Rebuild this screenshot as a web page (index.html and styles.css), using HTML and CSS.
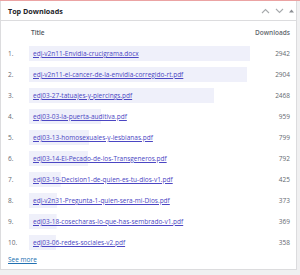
FILE: index.html
```html
<!DOCTYPE html>
<html lang="es">
<head>
  <meta charset="UTF-8">
  <title>Top Downloads</title>
  <link rel="stylesheet" href="styles.css">
</head>
<body>
  <div class="postbox">
    <div class="postbox-header">
      <h2>Top Downloads</h2>
      <div class="handle-actions">
        <svg width="9" height="6" viewBox="0 0 9 6"><path d="M1 5 4.5 1.5 8 5" fill="none" stroke="#a7aaad" stroke-width="1.1"/></svg>
        <svg width="9" height="6" viewBox="0 0 9 6"><path d="M1 1 4.5 4.5 8 1" fill="none" stroke="#a7aaad" stroke-width="1.1"/></svg>
        <svg width="5" height="4" viewBox="0 0 5 4"><path d="M0 3.5 2.5 0.5 5 3.5z" fill="#8c8f94"/></svg>
      </div>
    </div>

    <div class="inside">
      <div class="dl-row dl-head">
        <span></span>
        <span class="col-title">Title</span>
        <span class="col-count">Downloads</span>
      </div>

      <div class="dl-row">
        <span class="num">1.</span>
        <span class="col-title bar" style="background-size: 100% 15px"><a href="#">edj-v2n11-Envidia-crucigrama.docx</a></span>
        <span class="col-count">2942</span>
      </div>
      <div class="dl-row">
        <span class="num">2.</span>
        <span class="col-title bar" style="background-size: 98.7% 15px"><a href="#">edj-v2n11-el-cancer-de-la-envidia-corregido-rt.pdf</a></span>
        <span class="col-count">2904</span>
      </div>
      <div class="dl-row">
        <span class="num">3.</span>
        <span class="col-title bar" style="background-size: 83.9% 15px"><a href="#">edj03-27-tatuajes-y-piercings.pdf</a></span>
        <span class="col-count">2468</span>
      </div>
      <div class="dl-row">
        <span class="num">4.</span>
        <span class="col-title bar" style="background-size: 32.6% 15px"><a href="#">edj03-03-la-puerta-auditiva.pdf</a></span>
        <span class="col-count">959</span>
      </div>
      <div class="dl-row">
        <span class="num">5.</span>
        <span class="col-title bar" style="background-size: 27.2% 15px"><a href="#">edj03-13-homosexuales-y-lesbianas.pdf</a></span>
        <span class="col-count">799</span>
      </div>
      <div class="dl-row">
        <span class="num">6.</span>
        <span class="col-title bar" style="background-size: 26.9% 15px"><a href="#">edj03-14-El-Pecado-de-los-Transgeneros.pdf</a></span>
        <span class="col-count">792</span>
      </div>
      <div class="dl-row">
        <span class="num">7.</span>
        <span class="col-title bar" style="background-size: 14.4% 15px"><a href="#">edj03-19-Decision1-de-quien-es-tu-dios-v1.pdf</a></span>
        <span class="col-count">425</span>
      </div>
      <div class="dl-row">
        <span class="num">8.</span>
        <span class="col-title bar" style="background-size: 12.7% 15px"><a href="#">edj-v2n31-Pregunta-1-quien-sera-mi-Dios.pdf</a></span>
        <span class="col-count">373</span>
      </div>
      <div class="dl-row">
        <span class="num">9.</span>
        <span class="col-title bar" style="background-size: 12.5% 15px"><a href="#">edj03-18-cosecharas-lo-que-has-sembrado-v1.pdf</a></span>
        <span class="col-count">369</span>
      </div>
      <div class="dl-row">
        <span class="num">10.</span>
        <span class="col-title bar" style="background-size: 12.2% 15px"><a href="#">edj03-06-redes-sociales-v2.pdf</a></span>
        <span class="col-count">358</span>
      </div>

      <a href="#" class="see-more">See more</a>
    </div>
  </div>
</body>
</html>
```

FILE: styles.css
```css
/* Base */
body {
  margin: 0;
  background: #f0f0f1;
  border-top: 1px solid #eba3a3;
  font-family: "Open Sans", sans-serif;
  color: #3c434a;
}

/* Widget box */
.postbox {
  width: 295px;
  background: #fff;
  border: 1px solid #dcdcde;
  border-top: 0;
}

.postbox-header {
  display: flex;
  align-items: center;
  justify-content: space-between;
  height: 19px;
  padding: 0 2px 0 7px;
  border-bottom: 1px solid #dcdcde;
}

.postbox-header h2 {
  margin: 0;
  font-size: 7.2px;
  font-weight: 700;
  color: #1d2327;
}

.handle-actions {
  display: flex;
  align-items: center;
  gap: 5px;
}

.inside {
  padding: 0 6px 5px 7px;
}

/* Rows */
.dl-row {
  display: grid;
  grid-template-columns: 21px 221px 1fr;
  align-items: center;
  height: 21px;
  font-size: 6.5px;
}

.dl-head {
  height: 22px;
  font-weight: 600;
  color: #50575e;
}

.dl-head .col-title {
  margin-left: -2px;
}

.num {
  color: #646970;
}

.col-title {
  white-space: nowrap;
  line-height: 15px;
  padding-left: 4px;
}

.bar {
  background-image: linear-gradient(#eff0fa, #eff0fa);
  background-repeat: no-repeat;
  background-position: left center;
}

.col-title a {
  color: #4b46c3;
}

.col-count {
  text-align: right;
  color: #646970;
}

.see-more {
  display: block;
  margin-top: 2px;
  font-size: 6.5px;
  color: #2271b1;
}
```
